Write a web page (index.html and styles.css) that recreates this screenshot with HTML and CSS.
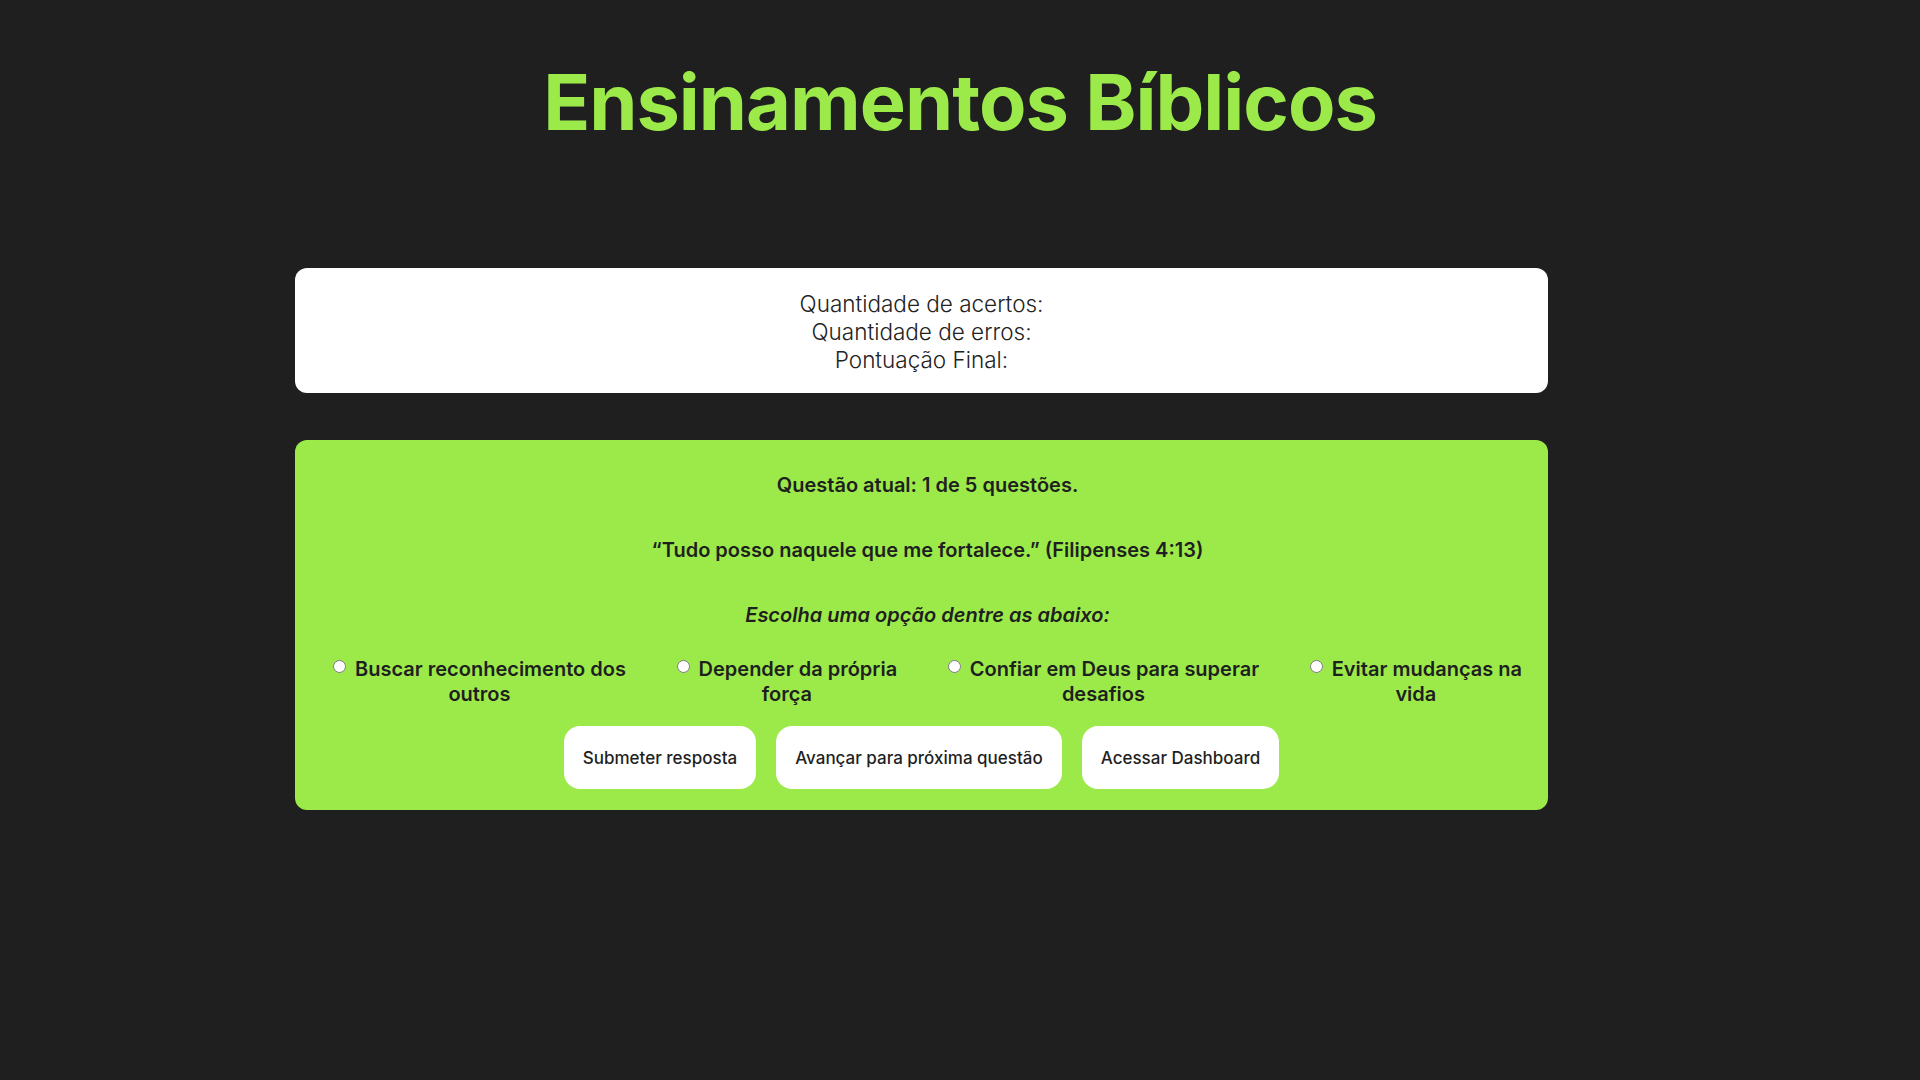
FILE: index.html
```html
<!DOCTYPE html>
<html lang="pt-BR">
<head>
<meta charset="utf-8">
<title>Ensinamentos Bíblicos</title>
<link rel="stylesheet" href="styles.css">
</head>
<body>
<header class="header">
  <h1 class="title">Ensinamentos Bíblicos</h1>
</header>
<main class="container">
  <section class="score-card">
    <p class="score-line">Quantidade de acertos:</p>
    <p class="score-line">Quantidade de erros:</p>
    <p class="score-line">Pontuação Final:</p>
  </section>
  <section class="quiz-card">
    <p class="quiz-progress">Questão atual: 1 de 5 questões.</p>
    <p class="quiz-verse">“Tudo posso naquele que me fortalece.” (Filipenses 4:13)</p>
    <p class="quiz-prompt">Escolha uma opção dentre as abaixo:</p>
    <div class="options">
      <label class="option"><input type="radio" name="resposta" class="option-radio"> Buscar reconhecimento dos<br>outros</label>
      <label class="option"><input type="radio" name="resposta" class="option-radio"> Depender da própria<br>força</label>
      <label class="option"><input type="radio" name="resposta" class="option-radio"> Confiar em Deus para superar<br>desafios</label>
      <label class="option"><input type="radio" name="resposta" class="option-radio"> Evitar mudanças na<br>vida</label>
    </div>
    <div class="actions">
      <button class="btn">Submeter resposta</button>
      <button class="btn">Avançar para próxima questão</button>
      <button class="btn">Acessar Dashboard</button>
    </div>
  </section>
</main>
</body>
</html>
```
FILE: styles.css
```css
* { box-sizing: border-box; }

body {
  margin: 0;
  background: #1f1f1f;
  font-family: "Inter", "Noto Sans", sans-serif;
  color: #1f1f1f;
  min-height: 1080px;
}

.header {
  padding-top: 54px;
}

.title {
  margin: 0;
  text-align: center;
  color: #9bea4a;
  font-size: 77.5px;
  line-height: 96px;
  font-weight: 700;
  letter-spacing: -1px;
}

.container {
  width: 1253px;
  margin: 118px 0 0 295px;
  display: flex;
  flex-direction: column;
  gap: 47px;
}

.score-card {
  background: #ffffff;
  border-radius: 12px;
  padding: 22px 20px 19px;
  text-align: center;
}

.score-line {
  margin: 0;
  font-size: 22.5px;
  line-height: 28px;
  font-weight: 300;
  color: #222;
}

.quiz-card {
  background: #9bea4a;
  border-radius: 12px;
  padding: 33px 26px 21px 38px;
  text-align: center;
}

.quiz-progress,
.quiz-verse,
.quiz-prompt {
  margin: 0;
  font-size: 20px;
  line-height: 25px;
  font-weight: 600;
}

.quiz-verse { margin-top: 40px; }
.quiz-prompt { margin-top: 40px; font-style: italic; }

.options {
  margin-top: 29px;
  display: flex;
  justify-content: space-between;
}

.option {
  text-align: center;
  font-size: 20px;
  line-height: 25px;
  font-weight: 600;
}

.option-radio {
  margin: 0 4px 0 0;
  width: 13px;
  height: 13px;
  vertical-align: 3px;
}

.actions {
  margin-top: 19px;
  display: flex;
  justify-content: center;
  gap: 20px;
  padding-right: 12px;
}

.btn {
  height: 63px;
  padding: 0 19px;
  border: none;
  border-radius: 16px;
  background: #ffffff;
  font-family: inherit;
  font-size: 17px;
  font-weight: 500;
  color: #1f1f1f;
}
```
